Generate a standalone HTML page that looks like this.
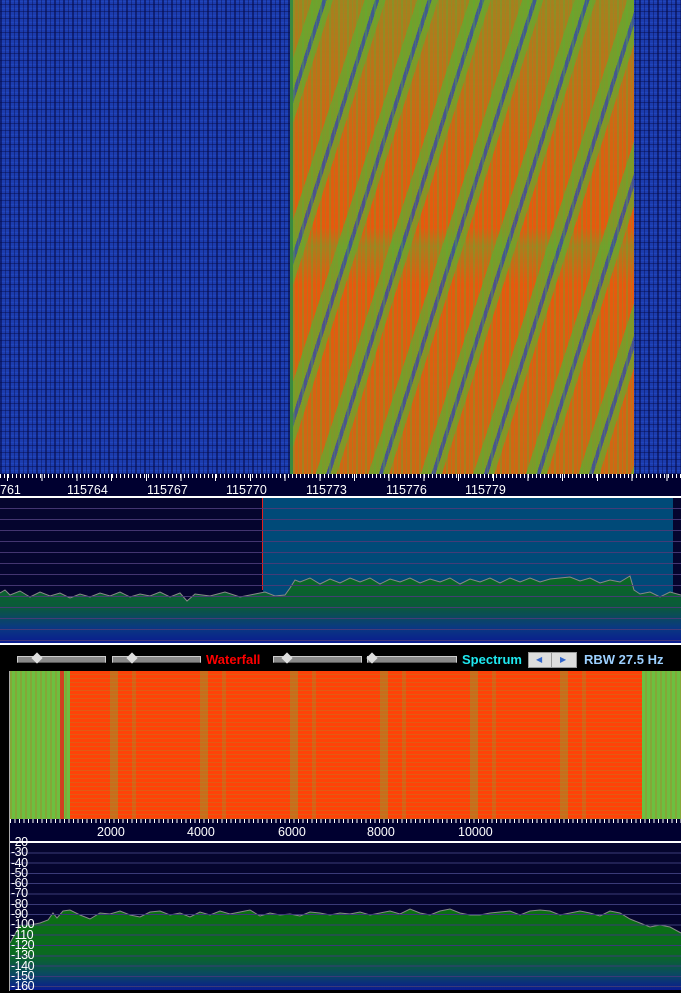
<!DOCTYPE html>
<html><head><meta charset="utf-8"><style>
*{margin:0;padding:0}
body{width:681px;height:993px;background:#000;position:relative;overflow:hidden;font-family:"Liberation Sans",sans-serif}
.a{position:absolute}
.noise{background:
 repeating-linear-gradient(90deg,rgba(5,10,70,.55) 0 2px,transparent 2px 5px,rgba(5,10,70,.4) 5px 6px,transparent 6px 9px),
 repeating-linear-gradient(0deg,rgba(5,10,70,.45) 0 1px,transparent 1px 3px,rgba(40,90,220,.3) 3px 4px,transparent 4px 7px),#1c3cae}
.band{background:
 repeating-linear-gradient(90deg,rgba(90,175,50,.35) 0 2px,transparent 2px 5px,rgba(90,175,50,.25) 5px 6px,transparent 6px 9px),
 repeating-linear-gradient(108deg,rgba(0,0,0,0) 0 18px,rgba(90,175,50,.7) 18px 28px,rgba(30,80,180,.75) 28px 32px,rgba(90,175,50,.65) 32px 38px,rgba(0,0,0,0) 38px 50px),
 linear-gradient(180deg,rgba(90,175,50,.55) 0,rgba(90,175,50,.25) 30%,rgba(90,175,50,.15) 48%,rgba(90,175,50,.5) 52%,rgba(90,175,50,.15) 60%,rgba(90,175,50,.3) 100%),#ff4a08}
.scale{background:#000030;color:#fff;font-size:12.5px}
.tick{background:repeating-linear-gradient(90deg,#fff 0 1px,transparent 1px 4px)}
.grid{background:repeating-linear-gradient(180deg,transparent 0 10px,#4a3a78 10px 11px)}
.slider{height:5px;background:#888;border:1px solid #ccc;border-bottom-color:#555}
.knob{position:absolute;width:8px;height:8px;background:#ddd;transform:rotate(45deg);top:-3px}
</style></head><body>
<div class="a noise" style="left:0;top:0;width:681px;height:474px"></div>
<div class="a band" style="left:293px;top:0;width:341px;height:474px"></div>
<div class="a" style="left:290px;top:0;width:3px;height:474px;background:#3a8a40"></div>
<div class="a scale" style="left:0;top:474px;width:681px;height:23px">
 <div class="a tick" style="left:0;top:0;width:681px;height:4px"></div>
 <div class="a tick" style="left:0;top:0;width:681px;height:7px;background:repeating-linear-gradient(90deg,#fff 0 1px,transparent 1px 34.7px);background-position:7px 0"></div>
 <span class="a" style="left:0;top:9px">761</span>
 <span class="a" style="left:67px;top:9px">115764</span>
 <span class="a" style="left:147px;top:9px">115767</span>
 <span class="a" style="left:226px;top:9px">115770</span>
 <span class="a" style="left:306px;top:9px">115773</span>
 <span class="a" style="left:386px;top:9px">115776</span>
 <span class="a" style="left:465px;top:9px">115779</span>
</div>
<div class="a" style="left:0;top:496px;width:681px;height:2px;background:#fff"></div>
<div class="a" style="left:0;top:498px;width:681px;height:146px;background:#05052e"></div>
<div class="a" style="left:263px;top:498px;width:410px;height:146px;background:#004a78"></div>
<div class="a" style="left:262px;top:498px;width:1px;height:92px;background:#e02020"></div>
<svg class="a" style="left:0;top:498px" width="681" height="146">
<defs><linearGradient id="g1" x1="0" y1="0" x2="0" y2="1"><stop offset="0" stop-color="#0a6a20"/><stop offset=".45" stop-color="#0a5a3a"/><stop offset=".75" stop-color="#0a3a80"/><stop offset="1" stop-color="#0a1a90"/></linearGradient></defs>
<polygon fill="url(#g1)" points="0,95 5,92 10,97 20,93 30,99 40,94 50,98 60,95 70,100 80,96 90,99 100,95 110,98 120,94 130,99 140,96 150,98 160,94 170,99 180,95 187,103 195,96 210,98 225,94 240,99 255,96 265,94 275,98 285,97 290,90 295,82 300,84 310,80 320,86 330,81 340,85 350,80 360,84 370,80 380,86 390,81 400,84 410,80 420,85 430,81 440,84 450,80 460,86 470,81 480,84 490,80 500,85 510,80 520,84 530,80 540,84 550,81 560,80 570,79 580,83 590,80 600,85 610,82 620,84 630,78 634,92 640,96 650,94 660,99 670,94 681,97 681,146 0,146"/>
<polyline fill="none" stroke="#888" stroke-width="1" points="0,95 5,92 10,97 20,93 30,99 40,94 50,98 60,95 70,100 80,96 90,99 100,95 110,98 120,94 130,99 140,96 150,98 160,94 170,99 180,95 187,103 195,96 210,98 225,94 240,99 255,96 265,94 275,98 285,97 290,90 295,82 300,84 310,80 320,86 330,81 340,85 350,80 360,84 370,80 380,86 390,81 400,84 410,80 420,85 430,81 440,84 450,80 460,86 470,81 480,84 490,80 500,85 510,80 520,84 530,80 540,84 550,81 560,80 570,79 580,83 590,80 600,85 610,82 620,84 630,78 634,92 640,96 650,94 660,99 670,94 681,97"/>
</svg>
<div class="a grid" style="left:0;top:498px;width:681px;height:146px;opacity:.9"></div>
<div class="a" style="left:0;top:643px;width:681px;height:2px;background:#fff"></div>
<div class="a slider" style="left:17px;top:656px;width:87px"><div class="knob" style="left:15px"></div></div>
<div class="a slider" style="left:112px;top:656px;width:87px"><div class="knob" style="left:15px"></div></div>
<div class="a" style="left:206px;top:652px;color:#f00;font-size:13px;font-weight:bold">Waterfall</div>
<div class="a slider" style="left:273px;top:656px;width:87px"><div class="knob" style="left:9px"></div></div>
<div class="a slider" style="left:367px;top:656px;width:88px"><div class="knob" style="left:0px"></div></div>
<div class="a" style="left:462px;top:652px;color:#1ee8f0;font-size:13px;font-weight:bold">Spectrum</div>
<div class="a" style="left:528px;top:652px;width:47px;height:14px;background:#ddd;border:1px solid #999;font-size:8px;color:#36c;line-height:14px"><span style="position:absolute;left:7px">◀</span><span style="position:absolute;left:22px;top:0;width:1px;height:14px;background:#999"></span><span style="position:absolute;left:31px">▶</span></div>
<div class="a" style="left:584px;top:652px;color:#9cd0ff;font-size:13px;font-weight:bold">RBW 27.5 Hz</div>
<div class="a" style="left:10px;top:671px;width:671px;height:148px;background:repeating-linear-gradient(90deg,rgba(180,120,40,.35) 0 2px,transparent 2px 5px),#6cc040"></div>
<div class="a" style="left:70px;top:671px;width:572px;height:148px;background:
 repeating-linear-gradient(0deg,rgba(140,160,50,.25) 0 1px,transparent 1px 4px),
 repeating-linear-gradient(90deg,transparent 0 40px,rgba(140,160,50,.45) 40px 48px,transparent 48px 62px,rgba(140,160,50,.3) 62px 66px,transparent 66px 90px),#ff4208"></div>
<div class="a" style="left:60px;top:671px;width:4px;height:148px;background:#d04020"></div>
<div class="a scale" style="left:10px;top:819px;width:671px;height:23px">
 <div class="a tick" style="left:0;top:0;width:671px;height:4px;background:repeating-linear-gradient(90deg,#fff 0 1px,transparent 1px 4.5px)"></div>
 <span class="a" style="left:87px;top:6px">2000</span>
 <span class="a" style="left:177px;top:6px">4000</span>
 <span class="a" style="left:268px;top:6px">6000</span>
 <span class="a" style="left:357px;top:6px">8000</span>
 <span class="a" style="left:448px;top:6px">10000</span>
</div>
<div class="a" style="left:10px;top:841px;width:671px;height:2px;background:#fff"></div>
<div class="a" style="left:10px;top:843px;width:671px;height:147px;background:#05052e"></div>
<svg class="a" style="left:10px;top:843px" width="671" height="147">
<defs><linearGradient id="g2" x1="0" y1="0" x2="0" y2="1"><stop offset="0" stop-color="#0a7010"/><stop offset=".55" stop-color="#0a6a20"/><stop offset=".8" stop-color="#0a4a60"/><stop offset="1" stop-color="#0a1a90"/></linearGradient></defs>
<polygon fill="url(#g2)" points="0,100 10,82 20,82 30,80 38,77 43,70 47,75 53,68 60,67 70,72 80,76 90,70 100,71 110,68 120,72 130,74 140,69 150,68 160,72 170,70 180,74 190,69 200,72 210,68 220,71 230,69 240,67 250,73 260,70 270,72 280,71 290,73 300,69 310,70 320,72 330,70 340,71 350,69 360,72 370,70 380,68 390,71 400,66 410,70 420,72 430,68 440,66 450,70 460,72 470,72 480,70 490,69 500,68 510,72 520,68 530,67 540,68 550,72 560,70 570,68 580,70 590,73 600,68 610,70 620,76 630,80 640,84 650,82 660,84 671,90 671,147 0,147"/>
<polyline fill="none" stroke="#888" points="0,100 10,82 20,82 30,80 38,77 43,70 47,75 53,68 60,67 70,72 80,76 90,70 100,71 110,68 120,72 130,74 140,69 150,68 160,72 170,70 180,74 190,69 200,72 210,68 220,71 230,69 240,67 250,73 260,70 270,72 280,71 290,73 300,69 310,70 320,72 330,70 340,71 350,69 360,72 370,70 380,68 390,71 400,66 410,70 420,72 430,68 440,66 450,70 460,72 470,72 480,70 490,69 500,68 510,72 520,68 530,67 540,68 550,72 560,70 570,68 580,70 590,73 600,68 610,70 620,76 630,80 640,84 650,82 660,84 671,90"/>
</svg>
<div class="a" style="left:10px;top:843px;width:671px;height:147px;background:repeating-linear-gradient(180deg,transparent 0 9.3px,#3a3a78 9.3px 10.3px)"></div>
<div class="a" style="left:11px;top:837px;color:#fff;font-size:12.5px;line-height:10.3px;width:30px;letter-spacing:-.5px">-20<br>-30<br>-40<br>-50<br>-60<br>-70<br>-80<br>-90<br>-100<br>-110<br>-120<br>-130<br>-140<br>-150<br>-160</div>
<div class="a" style="left:0;top:990px;width:681px;height:3px;background:#000"></div>
<div class="a" style="left:9px;top:671px;width:1px;height:320px;background:#aaa"></div>
</body></html>
